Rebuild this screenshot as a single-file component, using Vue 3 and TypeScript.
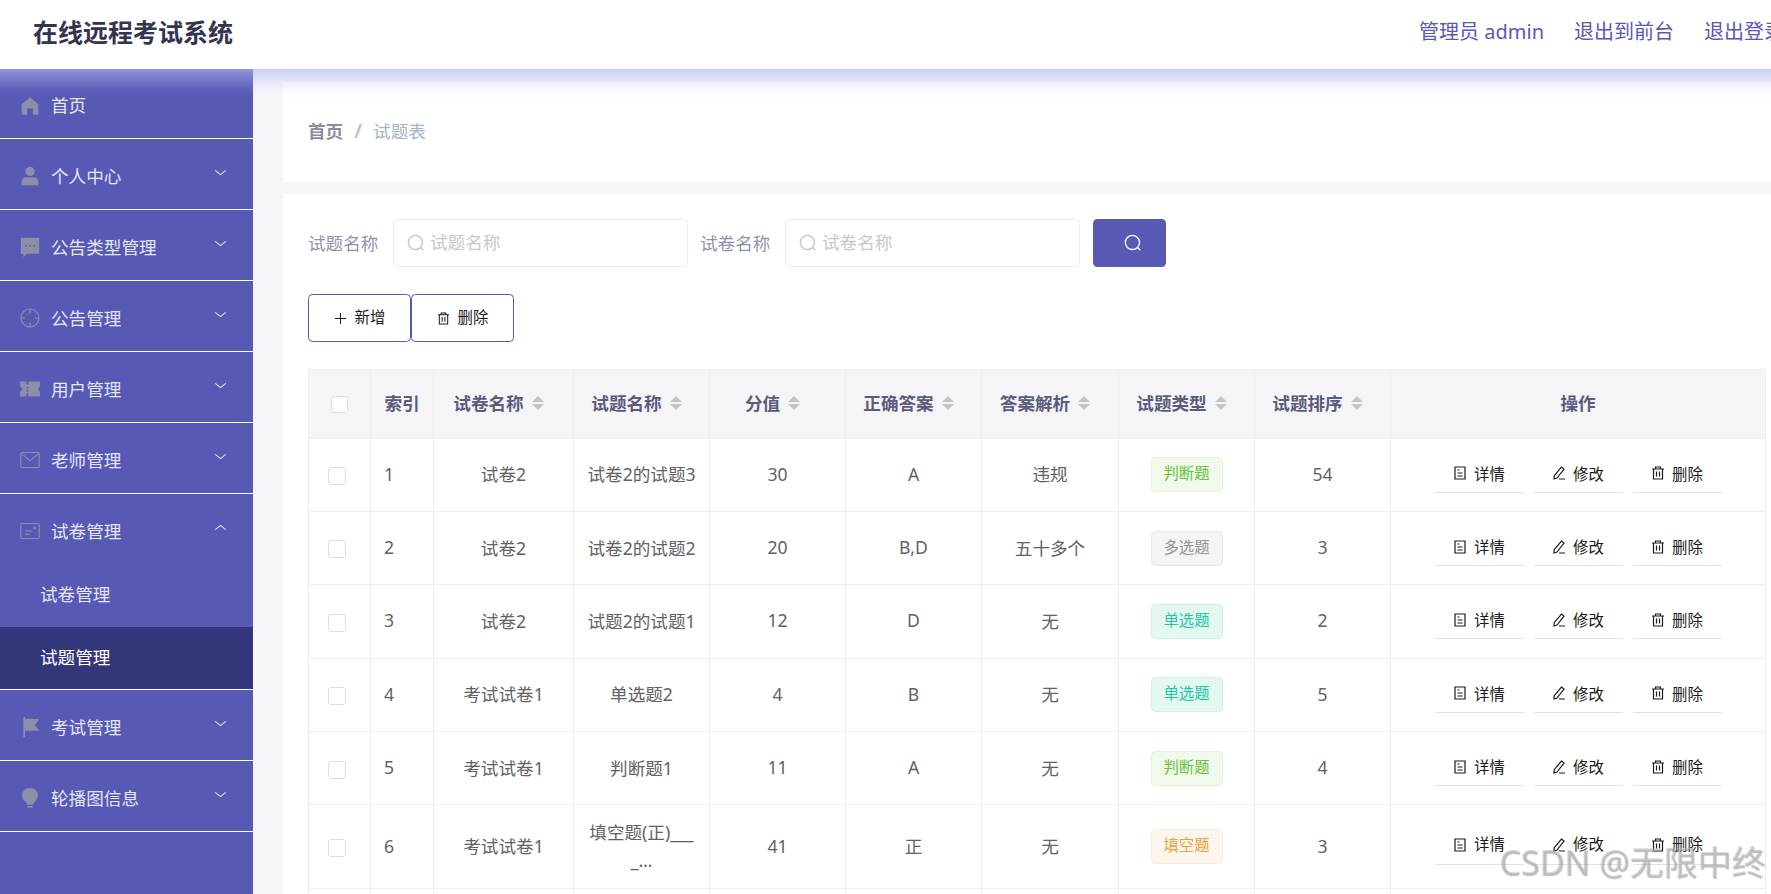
<script setup lang="ts">
interface MenuItem { label: string; icon: string; chevron?: 'down' | 'up'; children?: { label: string; active?: boolean }[] }
interface Row { id: number; paper: string; name: string[]; score: string; answer: string; analysis: string; type: string; tone: string; order: string }

const menu: MenuItem[] = [
  { label: '首页', icon: 'home' },
  { label: '个人中心', icon: 'user', chevron: 'down' },
  { label: '公告类型管理', icon: 'chat', chevron: 'down' },
  { label: '公告管理', icon: 'aim', chevron: 'down' },
  { label: '用户管理', icon: 'ticket', chevron: 'down' },
  { label: '老师管理', icon: 'mail', chevron: 'down' },
  { label: '试卷管理', icon: 'card', chevron: 'up', children: [{ label: '试卷管理' }, { label: '试题管理', active: true }] },
  { label: '考试管理', icon: 'flag', chevron: 'down' },
  { label: '轮播图信息', icon: 'bulb', chevron: 'down' }
]

const columns = [
  { label: '试卷名称', width: 140 },
  { label: '试题名称', width: 136 },
  { label: '分值', width: 136 },
  { label: '正确答案', width: 136 },
  { label: '答案解析', width: 137 },
  { label: '试题类型', width: 136 },
  { label: '试题排序', width: 136 }
]

const rows: Row[] = [
  { id: 1, paper: '试卷2', name: ['试卷2的试题3'], score: '30', answer: 'A', analysis: '违规', type: '判断题', tone: 'green', order: '54' },
  { id: 2, paper: '试卷2', name: ['试卷2的试题2'], score: '20', answer: 'B,D', analysis: '五十多个', type: '多选题', tone: 'gray', order: '3' },
  { id: 3, paper: '试卷2', name: ['试题2的试题1'], score: '12', answer: 'D', analysis: '无', type: '单选题', tone: 'teal', order: '2' },
  { id: 4, paper: '考试试卷1', name: ['单选题2'], score: '4', answer: 'B', analysis: '无', type: '单选题', tone: 'teal', order: '5' },
  { id: 5, paper: '考试试卷1', name: ['判断题1'], score: '11', answer: 'A', analysis: '无', type: '判断题', tone: 'green', order: '4' },
  { id: 6, paper: '考试试卷1', name: ['填空题(正)___', '_…'], score: '41', answer: '正', analysis: '无', type: '填空题', tone: 'orange', order: '3' }
]
const actions = [
  { label: '详情', icon: 'doc' },
  { label: '修改', icon: 'edit' },
  { label: '删除', icon: 'trash' }
]
</script>

<template>
  <div class="page">
    <header class="topbar">
      <div class="brand">在线远程考试系统</div>
      <nav class="toplinks">
        <span>管理员 admin</span>
        <span>退出到前台</span>
        <span>退出登录</span>
      </nav>
    </header>
    <div class="glow"></div>
    <div class="body">
      <aside class="side">
        <div v-for="m in menu" :key="m.label" class="group">
          <div class="item">
            <svg class="micon" viewBox="0 0 24 24">
              <path v-if="m.icon === 'home'" fill="currentColor" d="M12 1.500 22 10v12.500h-6.500V15h-7v7.500H2V10z" />
              <g v-else-if="m.icon === 'user'" fill="currentColor"><circle cx="12" cy="6.500" r="5.500" /><path d="M2 23v-4.500C2 15.500 4.500 13.500 7.500 13.500h9c3 0 5.500 2 5.500 5V23z" /></g>
              <path v-else-if="m.icon === 'chat'" fill="currentColor" fill-rule="evenodd" d="M1 1h22v19H9l-5 4v-4H1zM6 9.500v2h2v-2zM11 9.500v2h2v-2zM16 9.500v2h2v-2z" />
              <g v-else-if="m.icon === 'aim'" fill="none" stroke="currentColor" stroke-width="1.400"><circle cx="12" cy="12" r="10.800" /><path d="M12 1v5.500M12 17.500V23M1 12h5.500M17.500 12H23" /></g>
              <path v-else-if="m.icon === 'ticket'" fill="currentColor" fill-rule="evenodd" d="M0 3h8v3.500h2V3h14v5.500l-2.500 3.500 2.500 3.500V21H10v-3.500H8V21H0v-5.500L3 12 0 8.500zM8 9.500v2h2v-2zM8 13v2h2v-2z" />
              <g v-else-if="m.icon === 'mail'" fill="none" stroke="currentColor" stroke-width="1.400"><rect x="1" y="3" width="22" height="18" rx="1.500" /><path d="m1.500 4 10.500 9 10.500-9" /></g>
              <g v-else-if="m.icon === 'card'" fill="none" stroke="currentColor" stroke-width="1.400"><rect x="1" y="3" width="22" height="18" rx="1.500" /><path d="M6 12h8M6 16h6" /><circle cx="17.500" cy="8.500" r="1" fill="currentColor" /></g>
              <path v-else-if="m.icon === 'flag'" fill="currentColor" d="M4 0h2v2l17 .5-5 7 5 7L6 16.500V24H4z" />
              <g v-else-if="m.icon === 'bulb'" fill="currentColor"><path d="M12 0c5.500 0 9.500 4 9.500 9 0 4-2.500 6.500-4.500 8.500-.8.9-1 1.700-1 2.500H8.500c0-1-.4-1.800-1.500-3C5 15 2.500 12.800 2.500 9c0-5 4-9 9.500-9z" /><rect x="8.500" y="21.500" width="7" height="2" rx="1" /></g>
            </svg>
            <span class="mlabel">{{ m.label }}</span>
            <svg v-if="m.chevron" class="chev" viewBox="0 0 14 8"><path :d="m.chevron === 'down' ? 'M1 1.500 7 6.500 13 1.500' : 'M1 6.500 7 1.500 13 6.500'" /></svg>
          </div>
          <div v-for="c in m.children" :key="c.label" class="sub" :class="{ on: c.active }">{{ c.label }}</div>
        </div>
      </aside>

      <main class="main">
        <section class="crumbs">
          <b>首页</b><i>/</i><span>试题表</span>
        </section>
        <section class="panel">
          <div class="search">
            <label>试题名称</label>
            <div class="field">
              <svg class="lens" viewBox="0 0 16 16"><circle cx="7.500" cy="7.500" r="6.300" /><path d="m12 12 2.500 2.500" /></svg>
              <span>试题名称</span>
            </div>
            <label>试卷名称</label>
            <div class="field">
              <svg class="lens" viewBox="0 0 16 16"><circle cx="7.500" cy="7.500" r="6.300" /><path d="m12 12 2.500 2.500" /></svg>
              <span>试卷名称</span>
            </div>
            <button class="go" type="button" aria-label="搜索">
              <svg viewBox="0 0 16 16"><circle cx="7.500" cy="7.500" r="6.300" /><path d="m12 12 2.500 2.500" /></svg>
            </button>
          </div>
          <div class="tools">
            <button type="button">
              <svg viewBox="0 0 14 14"><path d="M7 1v12M1 7h12" /></svg>新增
            </button>
            <button type="button">
              <svg viewBox="0 0 14 14"><path d="M1 3h12M4.500 3V1h5v2M2.500 3v10h9V3M5.500 5.500v5M8.500 5.500v5" /></svg>删除
            </button>
          </div>
          <table class="grid">
            <colgroup>
              <col style="width:62px" /><col style="width:63px" />
              <col v-for="c in columns" :key="c.label" :style="{ width: c.width + 'px' }" />
              <col style="width:375px" />
            </colgroup>
            <thead>
              <tr>
                <th class="chk-h"><span class="box small"></span></th>
                <th>索引</th>
                <th v-for="c in columns" :key="c.label">
                  <span class="hcell">{{ c.label }}<span class="carets"><em class="up"></em><em class="down"></em></span></span>
                </th>
                <th>操作</th>
              </tr>
            </thead>
            <tbody>
              <tr v-for="r in rows" :key="r.id" :class="{ tall: r.name.length > 1 }">
                <td class="chk"><span class="box"></span></td>
                <td class="idx">{{ r.id }}</td>
                <td>{{ r.paper }}</td>
                <td class="nm"><div v-for="(l, i) in r.name" :key="i">{{ l }}</div></td>
                <td>{{ r.score }}</td>
                <td>{{ r.answer }}</td>
                <td>{{ r.analysis }}</td>
                <td><span class="tag" :class="r.tone">{{ r.type }}</span></td>
                <td>{{ r.order }}</td>
                <td>
                  <div class="ops">
                    <span v-for="a in actions" :key="a.label" class="op">
                      <svg viewBox="0 0 14 14">
                        <path v-if="a.icon === 'doc'" d="M2 1h10v12H2zM4.500 4h2M4.500 7h5M4.500 10h5" />
                        <path v-else-if="a.icon === 'edit'" d="M9.500 1 12 3 5 12l-3 1 .2-3.300zM7 13h6" />
                        <path v-else d="M1 3h12M4.500 3V1h5v2M2.500 3v10h9V3M5.500 5.500v5M8.500 5.500v5" />
                      </svg>{{ a.label }}
                    </span>
                  </div>
                </td>
              </tr>
              <tr class="tail"><td v-for="n in 10" :key="n"></td></tr>
            </tbody>
          </table>
        </section>
      </main>
    </div>
    <div class="mark">CSDN @无限中终</div>
  </div>
</template>

<style>
html, body { margin: 0; height: 100%; overflow: hidden; background: #f6f7f9; }
</style>

<style scoped>
.page { position: relative; width: 1771px; height: 894px; overflow: hidden; display: flex; flex-direction: column; font-family: "Noto Sans", "Noto Sans CJK SC", sans-serif; font-size: 17.6px; color: #606266; }
.topbar { height: 69px; flex: none; background: #fff; display: flex; align-items: center; justify-content: space-between; padding: 0 0 8px 33px; box-sizing: border-box; white-space: nowrap; }
.brand { font-size: 25px; font-weight: 700; color: #33344f; }
.toplinks { display: flex; gap: 30px; font-size: 20px; color: #5759b4; margin-right: -13px; }
.glow { position: absolute; left: 0; right: 0; top: 69px; height: 30px; background: linear-gradient(180deg, rgba(181, 183, 242, .64), rgba(181, 183, 242, .25) 13px, rgba(181, 183, 242, .05) 22px, rgba(181, 183, 242, 0)); z-index: 2; pointer-events: none; }
.body { flex: 1; display: flex; min-height: 0; }
.side { width: 253px; flex: none; background: #5759b4; }
.item { height: 70px; display: flex; align-items: center; position: relative; padding-left: 21px; color: #e4e6f6; }
.group:first-child .item { height: 69px; }
.group { border-bottom: 1px solid #fff; }
.micon { width: 20px; height: 20px; color: #8b8fa8; flex: none; margin: 4px 0 0 -1px; }
.mlabel { margin-left: 11px; padding-top: 2px; }
.chev { position: absolute; left: 214px; top: 30px; width: 13px; height: 7px; fill: none; stroke: #e4e6f6; stroke-width: 1.200; }
.sub { height: 62px; line-height: 61px; padding-left: 40px; color: #e4e6f6; }
.item + .sub { height: 63px; }
.sub.on { background: #33367a; color: #fff; }
.main { flex: 1; min-width: 0; padding: 13px 0 0 30px; overflow: hidden; }
.crumbs { height: 100px; box-sizing: border-box; background: #fff; display: flex; align-items: center; padding: 0 0 3px 25px; }
.crumbs b { color: #8b8ca0; font-weight: 700; }
.crumbs i { font-style: normal; font-weight: 700; margin: 0 11px 0 11px; color: #c0c4cc; font-size: 19px; }
.crumbs span { color: #a4b4c8; }
.panel { margin-top: 12px; background: #fff; padding: 25px 0 0 25px; height: 800px; }
.search { display: flex; align-items: center; height: 48px; }
.search label { color: #8f91b4; margin-right: 15px; width: 70px; white-space: nowrap; padding-bottom: 2px; }
.field { width: 295px; height: 48px; box-sizing: border-box; border: 1px solid #e9e9f8; border-radius: 4.400px; display: flex; align-items: center; padding: 0 0 4px 13px; color: #c6c8d0; margin-right: 12px; }
.lens { width: 18px; height: 18px; fill: none; stroke: #c0c4cc; stroke-width: 1.200; margin: 3px 5px 0 0; }
.go { width: 73px; height: 48px; margin-left: 1px; border: 0; border-radius: 4.400px; background: #5759b4; display: flex; align-items: center; justify-content: center; padding: 0 0 0 6px; }
.go svg { width: 18px; height: 18px; fill: none; stroke: #fff; stroke-width: 1.200; }
.tools { display: flex; margin-top: 27px; gap: 0; }
.tools button { width: 103px; height: 48px; box-sizing: border-box; background: #fff; border: 1px solid #5759b4; border-radius: 4.400px; display: flex; align-items: center; justify-content: center; font: inherit; font-size: 15.400px; color: #1a1a1a; padding: 0 0 3px; }
.tools svg { width: 13px; height: 13px; fill: none; stroke: #1a1a1a; stroke-width: 1.100; margin: 3px 8px 0 0; }
.grid { margin-top: 27px; width: 1457px; table-layout: fixed; border-collapse: collapse; }
.grid th, .grid td { border: 1px solid #ebeef5; text-align: center; padding: 0 0 2px; }
.grid th { height: 65.500px; background: #f5f5f8; color: #5a5b7e; font-weight: 700; }
.grid td { height: 70.400px; }
.grid tr.tall td { height: 81px; line-height: 28px; }
.grid tr.tail td { height: 40px; }
.hcell { display: inline-flex; align-items: center; padding-right: 10px; }
.carets { display: inline-block; width: 12px; margin-left: 8px; }
.carets em { display: block; width: 0; height: 0; border-left: 6px solid transparent; border-right: 6px solid transparent; }
.carets .up { border-bottom: 6px solid #c0c4cc; margin-bottom: 2px; }
.carets .down { border-top: 6px solid #c0c4cc; }
.box { display: inline-block; box-sizing: border-box; width: 18px; height: 18px; border: 1px solid #dcdfe6; border-radius: 3px; background: #fff; vertical-align: middle; }
.box.small { width: 17px; height: 17px; }
.grid td.chk { text-align: left; padding-left: 19px; }
.grid td.idx { text-align: left; padding-left: 13px; }
.tag { display: inline-block; box-sizing: border-box; width: 72px; height: 35px; line-height: 32px; font-size: 15.400px; border: 1px solid; border-radius: 4.400px; vertical-align: middle; position: relative; top: 1px; }
.tag.green { color: #67c23a; background: #f0f9eb; border-color: #e1f3d8; }
.tag.gray { color: #909399; background: #f4f4f5; border-color: #e9e9eb; }
.tag.teal { color: #1bc7a0; background: #e4f8f2; border-color: #cdf3e8; }
.tag.orange { color: #e6a23c; background: #fdf6ec; border-color: #faecd8; }
.ops { display: flex; justify-content: center; gap: 10px; }
.op { width: 89px; height: 38px; box-sizing: border-box; border-bottom: 1px solid #dfe0e8; display: flex; align-items: center; justify-content: center; font-size: 15.400px; color: #1a1a1a; }
.op svg { width: 14px; height: 14px; fill: none; stroke: #1a1a1a; stroke-width: 1.200; margin-right: 7px; }
.mark { position: absolute; left: 1499px; top: 836px; font-size: 34px; white-space: nowrap; color: rgba(190, 190, 190, .55); text-shadow: 1px 1px 1px rgba(120, 120, 120, .5); z-index: 3; }
</style>
